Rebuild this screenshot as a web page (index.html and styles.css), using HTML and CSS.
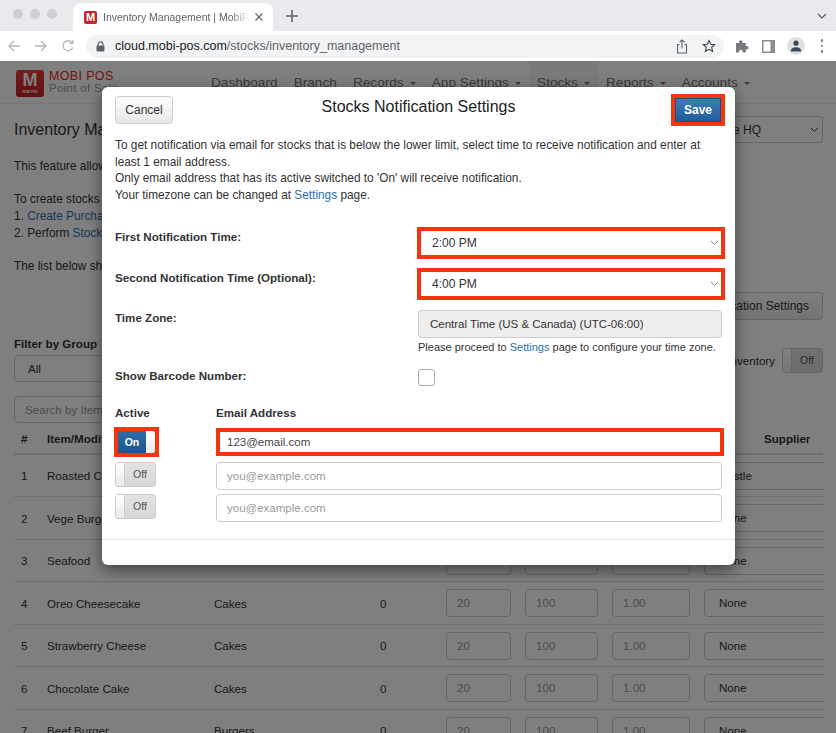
FILE: index.html

```html
<!DOCTYPE html>
<html lang="en">
<head>
	<meta charset="utf-8">
	<title>Inventory Management | MobiPOS</title>
	<link rel="stylesheet" href="styles.css">
</head>
<body>

	<!-- browser tabs -->
	<div class="tabstrip">
		<div class="lights"><i></i><i></i><i></i></div>
		<div class="tab">
			<span class="favicon">M</span>
			<span class="tab-title">Inventory Management | MobiPOS</span>
			<svg class="tab-close" width="10" height="10" viewBox="0 0 10 10"><path d="M1.5 1.5l7 7M8.5 1.5l-7 7" stroke="#5f6368" stroke-width="1.2" fill="none"/></svg>
		</div>
		<svg class="tab-new" width="14" height="14" viewBox="0 0 14 14"><path d="M7 1v12M1 7h12" stroke="#5f6368" stroke-width="1.6" fill="none"/></svg>
		<svg class="tab-menu" width="10" height="6" viewBox="0 0 10 6"><path d="M1 1l4 4 4-4" stroke="#5f6368" stroke-width="1.2" fill="none"/></svg>
	</div>

	<!-- address bar -->
	<div class="toolbar">
		<svg width="14" height="14" viewBox="0 0 14 14"><path d="M13 7H2M7 2L2 7l5 5" stroke="#b4b7bb" stroke-width="1.3" fill="none"/></svg>
		<svg width="14" height="14" viewBox="0 0 14 14"><path d="M1 7h11M7 2l5 5-5 5" stroke="#b4b7bb" stroke-width="1.3" fill="none"/></svg>
		<svg width="14" height="14" viewBox="0 0 14 14"><path d="M11.8 8.5A5 5 0 1 1 11 3.6M11.8 1v3.4H8.4" stroke="#b4b7bb" stroke-width="1.3" fill="none"/></svg>
		<div class="omnibox">
			<svg width="9" height="11" viewBox="0 0 9 11"><path d="M2 5V3.4a2.5 2.5 0 0 1 5 0V5" stroke="#5f6368" stroke-width="1.1" fill="none"/><rect x="0.5" y="4.6" width="8" height="6" rx="1" fill="#5f6368"/></svg>
			<span class="url">cloud.mobi-pos.com<span class="url-path">/stocks/inventory_management</span></span>
			<svg class="omni-share" width="12" height="15" viewBox="0 0 12 15"><path d="M3.5 5.5H1.5v8.500h9v-8.500H8.500M6 9.500V1M3.500 3.200L6 .9l2.500 2.300" stroke="#5f6368" stroke-width="1.1" fill="none"/></svg>
			<svg class="omni-star" width="14" height="14" viewBox="0 0 14 14"><path d="M7 1.500l1.700 3.700 4 .4-3 2.700.9 4L7 10.300l-3.600 2 .9-4-3-2.700 4-.4z" stroke="#3c4043" stroke-width="1.100" fill="none"/></svg>
		</div>
		<svg class="tool-ext" width="14" height="14" viewBox="0 0 14 14"><path d="M1 4h3V3a1.800 1.800 0 0 1 3.600 0v1h3.200v3h1a1.800 1.800 0 0 1 0 3.600h-1V13.500H7.600v-1a1.800 1.800 0 0 0-3.600 0v1H1z" fill="#777a7e"/></svg>
		<svg class="tool-side" width="13" height="13" viewBox="0 0 13 13"><rect x="0.750" y="0.750" width="11.500" height="11.500" fill="#fff" stroke="#8a8d91" stroke-width="1.500"/><rect x="8.500" y="0.500" width="4" height="12" fill="#8a8d91"/></svg>
		<div class="avatar"><svg width="12" height="12" viewBox="0 0 12 12"><circle cx="6" cy="3.200" r="2.600" fill="#3c4a5c"/><path d="M.8 11.500c0-3 2.400-4.300 5.200-4.300s5.200 1.300 5.200 4.300z" fill="#3c4a5c"/></svg></div>
		<div class="dots"><i></i><i></i><i></i></div>
	</div>

	<div class="page">

		<div class="navbar">
			<div class="brand">
				<div class="brand-mark">M<small>MOBI POS</small></div>
				<div class="brand-name"><b>MOBI POS</b><span>Point of Sale</span></div>
			</div>
			<ul class="nav">
				<li>Dashboard</li>
				<li>Branch</li>
				<li class="caret">Records</li>
				<li class="caret">App Settings</li>
				<li class="caret active">Stocks</li>
				<li class="caret">Reports</li>
				<li class="caret">Accounts</li>
			</ul>
		</div>

		<div class="content">
			<div class="title-row">
				<h1>Inventory Management</h1>
				<div class="branch-select">Store HQ <svg width="9" height="6" viewBox="0 0 9 6"><path d="M1 1l3.500 3.500L8 1" stroke="#333" fill="none"/></svg></div>
			</div>
			<div class="intro">
				<p>This feature allows you to keep track</p>
				<p>To create stocks</p>
				<p>1. <a>Create Purchase Order</a></p>
				<p>2. Perform <a>Stock Take</a></p>
				<p class="last">The list below shows your stocks</p>
			</div>
			<div class="notify-row"><button class="btn">Notification Settings</button></div>
			<div class="filter-row">
				<div class="filter">
					<label>Filter by Group</label>
					<div class="field filter-select">All</div>
				</div>
				<div class="inventory-switch">Inventory
					<div class="switch"><span class="knob"></span><span class="switch-text">Off</span></div>
				</div>
			</div>
			<div class="field search">Search by Item</div>

			<div class="stock-table">
				<div class="row head">
					<div>#</div><div>Item/Modifier</div><div>Category</div><div>Qty</div><div></div><div></div><div></div><div class="supplier-head">Supplier</div>
				</div>
				<div class="row"><div>1</div><div>Roasted Chicken</div><div>Chicken</div><div>0</div><div><span class="field">20</span></div><div><span class="field">100</span></div><div><span class="field">1.00</span></div><div><span class="field pick">Nestle</span></div></div>
				<div class="row"><div>2</div><div>Vege Burger</div><div>Burgers</div><div>0</div><div><span class="field">20</span></div><div><span class="field">100</span></div><div><span class="field">1.00</span></div><div><span class="field pick">None</span></div></div>
				<div class="row"><div>3</div><div>Seafood</div><div>Pasta</div><div>0</div><div><span class="field">20</span></div><div><span class="field">100</span></div><div><span class="field">1.00</span></div><div><span class="field pick">None</span></div></div>
				<div class="row"><div>4</div><div>Oreo Cheesecake</div><div>Cakes</div><div>0</div><div><span class="field">20</span></div><div><span class="field">100</span></div><div><span class="field">1.00</span></div><div><span class="field pick">None</span></div></div>
				<div class="row"><div>5</div><div>Strawberry Cheese</div><div>Cakes</div><div>0</div><div><span class="field">20</span></div><div><span class="field">100</span></div><div><span class="field">1.00</span></div><div><span class="field pick">None</span></div></div>
				<div class="row"><div>6</div><div>Chocolate Cake</div><div>Cakes</div><div>0</div><div><span class="field">20</span></div><div><span class="field">100</span></div><div><span class="field">1.00</span></div><div><span class="field pick">None</span></div></div>
				<div class="row"><div>7</div><div>Beef Burger</div><div>Burgers</div><div>0</div><div><span class="field">20</span></div><div><span class="field">100</span></div><div><span class="field">1.00</span></div><div><span class="field pick">None</span></div></div>
			</div>
		</div>

		<div class="backdrop"></div>

		<!-- notification settings dialog -->
		<div class="modal">
			<div class="modal-head">
				<button class="btn cancel">Cancel</button>
				<h2>Stocks Notification Settings</h2>
				<button class="save marked">Save</button>
			</div>
			<div class="modal-intro">
				To get notification via email for stocks that is below the lower limit, select time to receive notification and enter at least 1 email address.<br>
				Only email address that has its active switched to 'On' will receive notification.<br>
				Your timezone can be changed at <a>Settings</a> page.
			</div>
			<div class="form-row first">
				<label>First Notification Time:</label>
				<div class="select marked">2:00 PM <svg width="9" height="6" viewBox="0 0 9 6"><path d="M1 1l3.500 3.500L8 1" stroke="#888" fill="none"/></svg></div>
			</div>
			<div class="form-row second">
				<label>Second Notification Time (Optional):</label>
				<div class="select marked">4:00 PM <svg width="9" height="6" viewBox="0 0 9 6"><path d="M1 1l3.500 3.500L8 1" stroke="#888" fill="none"/></svg></div>
			</div>
			<div class="form-row zone">
				<label>Time Zone:</label>
				<div>
					<div class="readonly">Central Time (US &amp; Canada) (UTC-06:00)</div>
					<div class="help">Please proceed to <a>Settings</a> page to configure your time zone.</div>
				</div>
			</div>
			<div class="form-row barcode">
				<label>Show Barcode Number:</label>
				<span class="checkbox"></span>
			</div>
			<div class="email-grid">
				<label>Active</label>
				<label>Email Address</label>
				<div class="switch on marked"><span class="switch-text">On</span><span class="knob"></span></div>
				<div class="input typed marked">123@email.com</div>
				<div class="switch"><span class="knob"></span><span class="switch-text">Off</span></div>
				<div class="input">you@example.com</div>
				<div class="switch"><span class="knob"></span><span class="switch-text">Off</span></div>
				<div class="input">you@example.com</div>
			</div>
			<div class="modal-foot"></div>
		</div>
	</div>

</body>
</html>
```

FILE: styles.css

```css
* {
	box-sizing: border-box;
}
body {
	margin: 0;
	width: 836px;
	height: 733px;
	overflow: hidden;
	font-family: "Liberation Sans", Arial, sans-serif;
	font-size: 11.600px;
	color: #333;
	background: #fff;
}
a {
	color: #2a6fb5;
}
p {
	margin: 0;
}

/* browser chrome */
.tabstrip {
	height: 31px;
	background: #e8eaed;
	display: flex;
	align-items: flex-end;
	position: relative;
}
.lights {
	display: flex;
	gap: 7px;
	padding: 0 0 12px 13px;
	width: 73px;
}
.lights i {
	width: 10px;
	height: 10px;
	border-radius: 50%;
	background: #cfd0d2;
}
.tab {
	width: 200px;
	height: 28px;
	background: #fff;
	border-radius: 8px 8px 0 0;
	display: flex;
	align-items: center;
	padding: 0 9px 0 11px;
}
.favicon {
	width: 13px;
	height: 13px;
	border-radius: 2px;
	background: #c5262b;
	color: #fff;
	font-size: 11px;
	font-weight: bold;
	line-height: 13px;
	text-align: center;
	flex: none;
}
.tab-title {
	margin-left: 6px;
	width: 148px;
	white-space: nowrap;
	overflow: hidden;
	font-size: 10.500px;
	color: #5f6368;
	-webkit-mask-image: linear-gradient(to right, #000 88%, transparent);
	mask-image: linear-gradient(to right, #000 88%, transparent);
}
.tab-close {
	margin-left: 5px;
}
.tab-new {
	margin: 0 0 8px 12px;
}
.tab-menu {
	margin: 0 9px 12px auto;
}
.toolbar {
	height: 30px;
	background: #fff;
	display: flex;
	align-items: center;
	padding-left: 7px;
	gap: 13px;
}
.omnibox {
	width: 638px;
	height: 23px;
	margin-left: -2px;
	border-radius: 12px;
	background: #f1f3f4;
	display: flex;
	align-items: center;
	padding-left: 10px;
	flex: none;
}
.url {
	margin-left: 10px;
	font-size: 12.500px;
	color: #202124;
	white-space: nowrap;
}
.url-path {
	color: #5f6368;
}
.omni-share {
	margin-left: auto;
}
.omni-star {
	margin: 0 8px 0 14px;
}
.tool-ext {
	margin-left: -2px;
	flex: none;
}
.tool-side {
	flex: none;
}
.avatar {
	width: 18px;
	height: 18px;
	border-radius: 50%;
	background: #dfe1e5;
	display: flex;
	align-items: center;
	justify-content: center;
	margin-left: -1.500px;
	flex: none;
}
.dots {
	display: flex;
	flex-direction: column;
	gap: 3px;
	margin-left: 3px;
}
.dots i {
	width: 2.500px;
	height: 2.500px;
	border-radius: 50%;
	background: #777a7e;
}

/* page behind the dialog */
.page {
	position: relative;
	height: 672px;
	overflow: hidden;
}
.navbar {
	height: 43px;
	background: #fff;
	border-bottom: 1px solid #eee;
	display: flex;
}
.brand {
	width: 203px;
	padding: 9px 0 0 16px;
	display: flex;
	gap: 5px;
}
.brand-mark {
	width: 28px;
	height: 27px;
	border-radius: 3px;
	background: linear-gradient(#ee3a3a, #c21e22);
	color: #fff;
	font-size: 18px;
	font-weight: bold;
	line-height: 21px;
	text-align: center;
}
.brand-mark small {
	display: block;
	font-size: 3px;
	line-height: 3px;
}
.brand-name b {
	display: block;
	color: #ee1c22;
	font-size: 12.500px;
	line-height: 13px;
	letter-spacing: .35px;
	font-weight: normal;
	white-space: nowrap;
}
.brand-name span {
	display: block;
	color: #999;
	font-size: 11.500px;
	line-height: 11px;
	letter-spacing: .3px;
	white-space: nowrap;
}
.nav {
	list-style: none;
	margin: 0;
	padding: 0;
	display: flex;
	gap: .2px;
}
.nav li {
	padding: 14px 8px 0;
	font-size: 13.600px;
	color: #777;
}
.nav .active {
	background: #f4f4f4;
}
.caret::after {
	content: "";
	display: inline-block;
	margin-left: 6px;
	vertical-align: 2px;
	border: 3.500px solid transparent;
	border-top-color: #777;
	border-bottom: 0;
}
.content {
	padding: 12px 13px 0 14px;
}
.title-row {
	display: flex;
	justify-content: space-between;
	align-items: center;
	height: 27px;
}
h1 {
	margin: 0;
	font-size: 16px;
	font-weight: normal;
}
.branch-select {
	width: 126px;
	height: 27px;
	border: 1px solid #ccc;
	border-radius: 4px;
	display: flex;
	align-items: center;
	justify-content: space-between;
	padding: 0 3px 0 13px;
	font-size: 12px;
}
.intro {
	margin-top: 15px;
	line-height: 16.700px;
	font-size: 11.850px;
}
.intro p:first-child, .intro p:nth-child(4) {
	margin-bottom: 16.700px;
}
.notify-row {
	display: flex;
	justify-content: flex-end;
	margin-top: 17px;
}
.btn {
	height: 28px;
	border: 1px solid #ccc;
	border-radius: 4px;
	padding: 0 13px;
	font: 12px "Liberation Sans", Arial, sans-serif;
	color: #333;
	background: linear-gradient(#fff, #e6e6e6);
}
.filter-row {
	display: flex;
	justify-content: space-between;
	margin-top: 16px;
}
.filter label {
	display: block;
	font-weight: bold;
	line-height: 15px;
	margin-bottom: 4px;
}
.field {
	display: block;
	border: 1px solid #ccc;
	border-radius: 4px;
	height: 28px;
	line-height: 26px;
	padding: 0 10px;
	background: #fff;
}
.filter-select {
	width: 300px;
	height: 27px;
	padding-left: 13px;
}
.inventory-switch {
	display: flex;
	align-items: center;
	gap: 7px;
	height: 25px;
	margin-top: 12px;
}
.search {
	width: 300px;
	height: 27px;
	margin-top: 14px;
	color: #999;
}

/* stock list */
.stock-table {
	overflow: hidden;
}
.row {
	display: grid;
	grid-template-columns: 33px 167px 166px 66px 79px 87px 92px 119px;
	height: 42.500px;
	align-items: center;
	border-bottom: 1px solid #ddd;
}
.row > div:first-child {
	padding-left: 7px;
}
.row .field {
	width: 65px;
	color: #999;
}
.row > div:nth-child(6) .field {
	width: 73px;
}
.row > div:nth-child(7) .field {
	width: 78px;
}
.row .pick {
	width: 140px;
	padding-left: 14px;
	color: #333;
}
.row.head {
	height: 32px;
	font-weight: bold;
	align-items: start;
	padding-top: 9px;
	border-bottom-width: 2px;
}
.supplier-head {
	padding-left: 60px;
	white-space: nowrap;
}

.backdrop {
	position: absolute;
	inset: 0;
	background: rgba(0, 0, 0, .5);
}

/* dialog */
.modal {
	position: absolute;
	top: 26px;
	left: 102px;
	width: 633px;
	height: 478px;
	background: #fff;
	border-radius: 6px;
	box-shadow: 0 5px 15px rgba(0, 0, 0, .5);
	padding: 9px 13px 0;
}
.modal label {
	font-weight: bold;
	display: block;
}
.modal-head {
	display: flex;
	align-items: center;
	justify-content: space-between;
	height: 28px;
}
.modal-head h2 {
	margin: -6px 11px 0 0;
	font-size: 16px;
	font-weight: normal;
	color: #222;
}
.cancel {
	width: 58px;
	padding: 0;
}
.save {
	width: 46px;
	height: 24px;
	margin-right: 1px;
	border: 1px solid #1f4f82;
	background: linear-gradient(#3a7cb8, #235d99);
	color: #fff;
	font: bold 12px "Liberation Sans", Arial, sans-serif;
	padding: 0;
}
.modal-intro {
	margin-top: 13px;
	line-height: 16.700px;
	font-size: 11.850px;
}
.form-row {
	display: grid;
	grid-template-columns: 303px 1fr;
}
.form-row label {
	line-height: 12px;
}
.form-row.first {
	margin-top: 27px;
}
.form-row.second {
	margin-top: 17px;
}
.form-row.zone {
	margin-top: 14px;
}
.form-row.zone label {
	padding-top: 2px;
}
.form-row.barcode {
	margin-top: 14px;
}
.form-row.barcode label {
	padding-top: 1px;
}
.select {
	width: 300px;
	height: 24px;
	margin-left: 3px;
	display: flex;
	align-items: center;
	justify-content: space-between;
	padding: 0 2px 0 11px;
	background: #fff;
	font-size: 12px;
}
.readonly {
	width: 304px;
	height: 28px;
	line-height: 27px;
	padding-left: 11px;
	background: #eee;
	border: 1px solid #ccc;
	border-radius: 4px;
	font-size: 11.500px;
}
.help {
	margin-top: 1px;
	line-height: 16px;
	font-size: 11px;
	white-space: nowrap;
}
.checkbox {
	display: block;
	width: 17px;
	height: 17px;
	border: 1px solid #aaa;
	border-radius: 3px;
}
.email-grid {
	display: grid;
	grid-template-columns: 101px 506px;
	grid-template-rows: 18px 30px 28px 28px;
	row-gap: 4px;
	margin-top: 20px;
}
.email-grid > :nth-child(3) {
	margin-top: 3px;
}
.email-grid > :nth-child(4) {
	margin-top: 4px;
}
.switch {
	width: 41px;
	height: 25px;
	border: 1px solid #ccc;
	border-radius: 3px;
	background: linear-gradient(#e2e2e2, #d8d8d8);
	display: flex;
	font-size: 10.500px;
	color: #555;
}
.knob {
	width: 9px;
	background: linear-gradient(#fff, #eaeaea);
	border-right: 1px solid #ccc;
	border-radius: 2px 0 0 2px;
	flex: none;
}
.switch-text {
	flex: 1;
	text-align: center;
	line-height: 23px;
}
.switch.on {
	width: 37px;
	height: 22px;
	margin-left: 3px;
	border: 0;
	background: linear-gradient(#2e6ea8, #20558c);
	color: #fff;
	font-weight: bold;
}
.switch.on .switch-text {
	line-height: 22px;
}
.switch.on .knob {
	border: 0;
	border-radius: 0 2px 2px 0;
}
.input {
	height: 28px;
	border: 1px solid #ccc;
	border-radius: 4px;
	line-height: 27px;
	padding-left: 10px;
	color: #999;
	font-size: 11.500px;
}
.input.typed {
	width: 500px;
	height: 20px;
	margin-left: 4px;
	padding-left: 7px;
	border: 0;
	line-height: 21px;
	color: #444;
}
.modal-foot {
	position: absolute;
	left: 0;
	right: 0;
	top: 452px;
	border-top: 1px solid #e5e5e5;
}

/* red highlight boxes */
.modal .marked {
	outline: 4px solid #f4360f;
	border-radius: 0;
}
```
